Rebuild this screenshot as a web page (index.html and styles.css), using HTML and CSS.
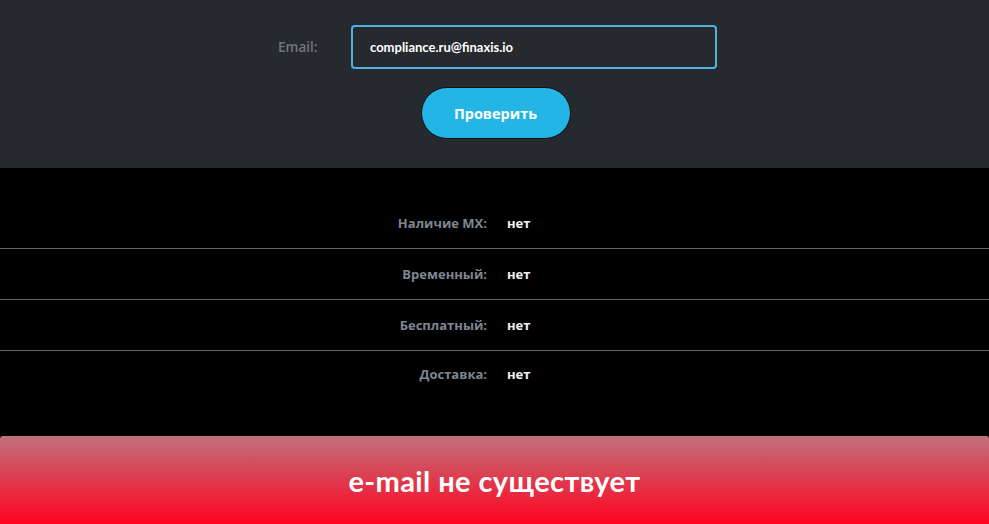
FILE: index.html
```html
<!DOCTYPE html>
<html lang="ru">
<head>
<meta charset="utf-8">
<link rel="stylesheet" href="styles.css">
</head>
<body>
<section class="top">
  <div class="field">
    <label class="field-label">Email:</label>
    <div class="input">compliance.ru@finaxis.io</div>
  </div>
  <button class="btn">Проверить</button>
</section>
<section class="results">
  <div class="row"><span class="key">Наличие MX:</span><span class="val">нет</span></div>
  <div class="row"><span class="key">Временный:</span><span class="val">нет</span></div>
  <div class="row"><span class="key">Бесплатный:</span><span class="val">нет</span></div>
  <div class="row"><span class="key">Доставка:</span><span class="val">нет</span></div>
</section>
<section class="status">e-mail не существует</section>
</body>
</html>
```
FILE: styles.css
```css
html, body { margin: 0; padding: 0; }
body {
  background: #000;
  font-family: "Open Sans", "DejaVu Sans", sans-serif;
  width: 989px;
  height: 524px;
  overflow: hidden;
}
.top {
  background: #26292e;
  height: 168px;
  box-sizing: border-box;
  padding-top: 25px;
  display: flex;
  flex-direction: column;
  align-items: center;
}
.field {
  display: flex;
  align-items: center;
  margin-left: 6px;
}
.field-label {
  width: 73px;
  color: #6f7682;
  font-size: 13.5px;
  font-weight: 600;
}
.input {
  box-sizing: border-box;
  width: 366px;
  height: 44px;
  border: 2px solid #4db4df;
  border-radius: 4px;
  color: #fff;
  font-family: "Lato", "Open Sans", sans-serif;
  font-size: 13px;
  font-weight: 700;
  padding-left: 17px;
  display: flex;
  align-items: center;
}
.btn {
  margin-top: 18px;
  margin-left: 2px;
  width: 150px;
  height: 52px;
  border-radius: 26px;
  border: 1px solid #0d1014;
  background: #23b5e6;
  color: #fff;
  font-family: "Open Sans", sans-serif;
  font-weight: 700;
  font-size: 14.5px;
}
.results {
  padding-top: 30px;
  height: 268px;
  box-sizing: border-box;
}
.row {
  display: grid;
  grid-template-columns: 487px 1fr;
  column-gap: 20px;
  height: 50px;
  align-items: center;
  border-bottom: 1px solid #5e636c;
  font-size: 13px;
  font-weight: 700;
}
.row:last-child { border-bottom: none; height: 46px; }
.key { text-align: right; color: #7f8693; }
.val { color: #f0f0f0; }
.status {
  height: 88px;
  border-radius: 3px 3px 0 0;
  background: linear-gradient(#c0717a, #ff0320);
  color: #fff;
  font-family: "Lato", "Open Sans", sans-serif;
  font-weight: 700;
  font-size: 29px;
  letter-spacing: 0.4px;
  display: flex;
  align-items: center;
  justify-content: center;
}
```
